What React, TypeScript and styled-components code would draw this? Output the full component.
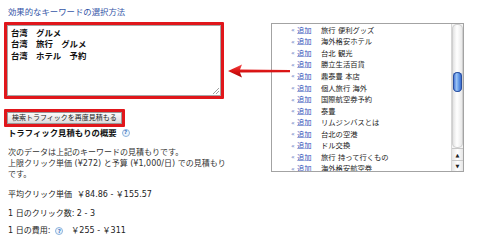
import React from 'react';
import styled, { createGlobalStyle } from 'styled-components';

const GlobalStyle = createGlobalStyle`
    html, body {
        margin: 0;
        padding: 0;
        background: #ffffff;
    }
    body {
        font-family: "DejaVu Sans", "Noto Sans CJK JP", sans-serif;
        color: #333333;
    }
`;

const Page = styled.div`
    position: relative;
    display: flex;
    align-items: flex-start;
    width: 480px;
    height: 244px;
    overflow: hidden;
`;

const LeftCol = styled.div`
    margin-left: 4px;
    width: 232px;
    display: flex;
    flex-direction: column;
    align-items: flex-start;
`;

const Title = styled.div`
    margin-top: 5px;
    padding-left: 4px;
    font-size: 8.4px;
    line-height: 14px;
    color: #3556a8;
`;

const Highlight = styled.div<{ gap: number }>`
    margin-top: ${p => p.gap}px;
    border: 3px solid #e0161b;
    border-radius: 1px;
`;

const KeywordArea = styled.div`
    position: relative;
    box-sizing: border-box;
    width: 214px;
    height: 71px;
    border: 1px solid #a6a6a6;
    padding: 1.5px 3px;
    font-size: 8.4px;
    line-height: 11.6px;
    font-weight: bold;
    color: #111111;
    white-space: pre;
`;

const Grip = styled.span`
    position: absolute;
    right: 1px;
    bottom: 1px;
    width: 6px;
    height: 6px;
    background: linear-gradient(
        135deg,
        transparent 45%,
        #a0a0a0 45%,
        #a0a0a0 55%,
        transparent 55%,
        transparent 72%,
        #a0a0a0 72%,
        #a0a0a0 82%,
        transparent 82%
    );
`;

const EstimateButton = styled.div`
    box-sizing: border-box;
    height: 12px;
    padding: 0 4px;
    border: 1px solid #9a9a9a;
    background: linear-gradient(#fbfbfb, #dcdcdc);
    font-size: 7px;
    line-height: 10px;
    color: #222222;
    white-space: nowrap;
`;

const Heading = styled.div`
    display: flex;
    align-items: center;
    gap: 5px;
    padding-left: 4px;
    font-size: 8.4px;
    line-height: 12px;
    font-weight: bold;
    color: #111111;
`;

const Help = styled.span`
    display: inline-flex;
    align-items: center;
    justify-content: center;
    box-sizing: border-box;
    width: 8px;
    height: 8px;
    border-radius: 50%;
    border: 1px solid #8db3dd;
    background: #eef5fc;
    color: #4a7cc2;
    font-size: 5.5px;
    font-weight: bold;
    line-height: 1;
`;

const Paragraph = styled.div`
    margin-top: 7.5px;
    padding-left: 4px;
    font-size: 8px;
    line-height: 11px;
    white-space: nowrap;
`;

const StatLine = styled.div<{ gap: number }>`
    display: flex;
    align-items: center;
    margin-top: ${p => p.gap}px;
    padding-left: 4px;
    font-size: 8px;
    line-height: 11px;
    white-space: nowrap;
    color: #222222;
`;

const Value = styled.span<{ indent: number }>`
    margin-left: ${p => p.indent}px;
`;

const RightCol = styled.div`
    margin-left: 35px;
    margin-top: 23px;
`;

const ListBox = styled.div`
    box-sizing: border-box;
    display: flex;
    width: 193px;
    height: 149px;
    border: 1px solid #a3a3a3;
    background: #ffffff;
`;

const Rows = styled.div`
    flex: 1;
    overflow: hidden;
    padding-left: 19px;
`;

const Row = styled.div`
    display: flex;
    align-items: center;
    height: 11.55px;
    font-size: 7.3px;
    white-space: nowrap;
`;

const Chevron = styled.span`
    width: 6px;
    font-size: 6px;
    color: #3a55b0;
`;

const AddLink = styled.span`
    width: 24px;
    color: #2f4fb8;
`;

const Keyword = styled.span`
    color: #1a1a1a;
`;

const Scrollbar = styled.div`
    display: flex;
    flex-direction: column;
    width: 11px;
    border-left: 1px solid #d6d6d6;
    background: #f4f4f4;
`;

const Track = styled.div`
    flex: 1;
    display: flex;
    flex-direction: column;
    align-items: center;
    padding-top: 48px;
    border-radius: 5px;
    background: linear-gradient(90deg, #dcdcdc, #ffffff 45%, #e4e4e4);
    box-shadow: inset 0 0 0 1px #cfcfcf;
`;

const Thumb = styled.div`
    width: 9px;
    height: 20px;
    border-radius: 5px;
    background: linear-gradient(90deg, #2d5fcf, #9cc4f5 40%, #6aa0ea 60%, #2a58c4);
    box-shadow: inset 0 0 0 1px #2b4f9e;
`;

const StepButton = styled.div<{ h: number }>`
    display: flex;
    align-items: center;
    justify-content: center;
    height: ${p => p.h}px;
    border-top: 1px solid #c8c8c8;
    background: linear-gradient(90deg, #e6e6e6, #ffffff 50%, #e6e6e6);
    font-size: 5px;
    color: #222222;
`;

const Pointer = styled.svg`
    position: absolute;
    left: 226px;
    top: 62px;
`;

const keywords = [
    '旅行 便利グッズ',
    '海外格安ホテル',
    '台北 観光',
    '勝立生活百貨',
    '鼎泰豊 本店',
    '個人旅行 海外',
    '国際航空券予約',
    '泰豊',
    'リムジンバスとは',
    '台北の空港',
    'ドル交換',
    '旅行 持って行くもの',
    '海外格安航空券',
];

const App = () => {
    return (
        <Page>
            <GlobalStyle />
            <LeftCol>
                <Title>効果的なキーワードの選択方法</Title>
                <Highlight gap={3}>
                    <KeywordArea>
                        {'台湾　グルメ\n台湾　旅行　グルメ\n台湾　ホテル　予約'}
                        <Grip />
                    </KeywordArea>
                </Highlight>
                <Highlight gap={10}>
                    <EstimateButton>検索トラフィックを再度見積もる</EstimateButton>
                </Highlight>
                <Heading>
                    トラフィック見積もりの概要
                    <Help>?</Help>
                </Heading>
                <Paragraph>
                    次のデータは上記のキーワードの見積もりです。
                    <br />
                    上限クリック単価 (¥272) と予算 (¥1,000/日) での見積もり
                    <br />
                    です。
                </Paragraph>
                <StatLine gap={9}>
                    平均クリック単価<Value indent={5}>￥84.86 - ￥155.57</Value>
                </StatLine>
                <StatLine gap={8}>1 日のクリック数: 2 - 3</StatLine>
                <StatLine gap={6}>
                    1 日の費用:<Value indent={5}><Help>?</Help></Value>
                    <Value indent={8}>￥255 - ￥311</Value>
                </StatLine>
            </LeftCol>
            <RightCol>
                <ListBox>
                    <Rows>
                        {keywords.map(k => (
                            <Row key={k}>
                                <Chevron>«</Chevron>
                                <AddLink>追加</AddLink>
                                <Keyword>{k}</Keyword>
                            </Row>
                        ))}
                    </Rows>
                    <Scrollbar>
                        <Track>
                            <Thumb />
                        </Track>
                        <StepButton h={11}>▲</StepButton>
                        <StepButton h={10}>▼</StepButton>
                    </Scrollbar>
                </ListBox>
            </RightCol>
            <Pointer width="68" height="18" viewBox="0 0 68 18">
                <defs>
                    <linearGradient id="arrowFill" x1="0" y1="0" x2="0" y2="1">
                        <stop offset="0" stopColor="#f24a4a" />
                        <stop offset="0.5" stopColor="#dc1414" />
                        <stop offset="1" stopColor="#a80606" />
                    </linearGradient>
                </defs>
                <path
                    d="M2 9 L16 2.5 L14 7.6 L64 7.9 L64 10.3 L14 10.6 L16 15.5 Z"
                    fill="url(#arrowFill)"
                />
            </Pointer>
        </Page>
    );
};

export default App;
